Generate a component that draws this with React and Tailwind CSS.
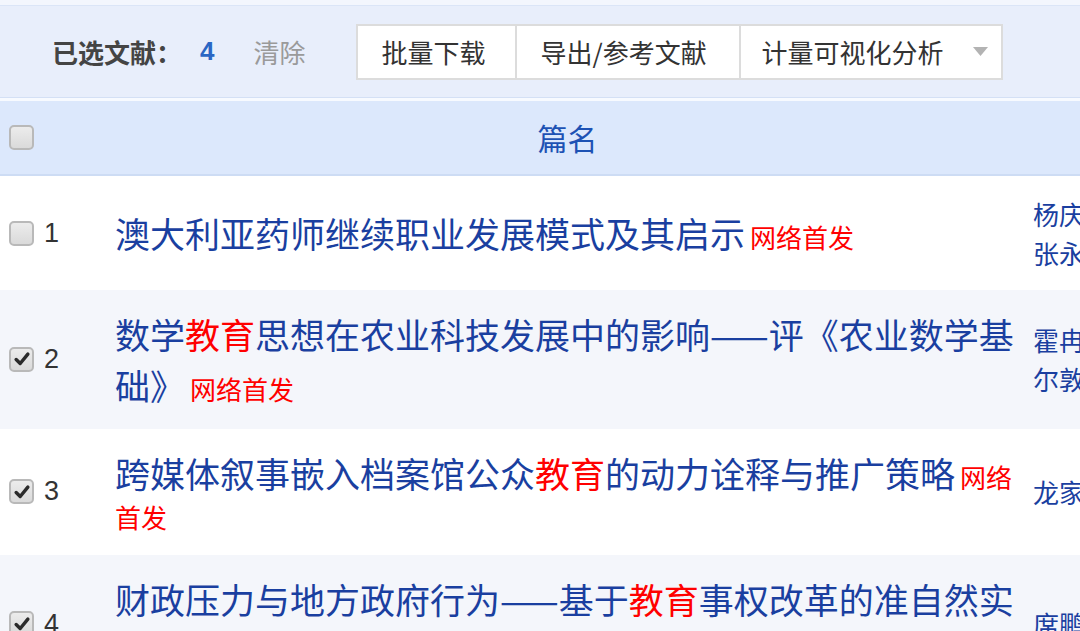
import React from 'react';

const CJK = "font-['Noto_Sans_CJK_SC','Noto_Sans',sans-serif]";

const rows = [
  {
    no: 1,
    checked: false,
    title: [['澳大利亚药师继续职业发展模式及其启示']],
    authors: ['杨庆华', '张永红'],
  },
  {
    no: 2,
    checked: true,
    title: [['数学'], ['教育', true], ['思想在农业科技发展中的影响——评《农业数学基础》']],
    authors: ['霍冉', '尔敦'],
  },
  {
    no: 3,
    checked: true,
    title: [['跨媒体叙事嵌入档案馆公众'], ['教育', true], ['的动力诠释与推广策略']],
    authors: ['龙家庆'],
  },
  {
    no: 4,
    checked: true,
    title: [['财政压力与地方政府行为——基于'], ['教育', true], ['事权改革的准自然实验']],
    authors: ['席鹏辉'],
  },
];

function Checkbox({ checked }) {
  return (
    <span className="flex h-[25px] w-[25px] shrink-0 items-center justify-center rounded-[5px] border-2 border-[#b9b9b9] bg-gradient-to-b from-[#ececec] to-[#dadada]">
      {checked && (
        <svg viewBox="0 0 20 20" className="h-[18px] w-[18px]">
          <path d="M3.5 10.5 L8 15 L16.5 4.5" fill="none" stroke="#2b2b2b" strokeWidth="3.8" strokeLinecap="round" strokeLinejoin="round" />
        </svg>
      )}
    </span>
  );
}

function Row({ row, striped }) {
  return (
    <div className={`flex items-center py-[18px] ${striped ? 'bg-[#f4f6fb]' : 'bg-white'}`}>
      {/* 勾选 + 序号 */}
      <div className="flex w-[115px] shrink-0 items-center pl-[9px]">
        <Checkbox checked={row.checked} />
        <span className="ml-[10px] font-['Liberation_Sans',sans-serif] text-[27px] text-[#333]">{row.no}</span>
      </div>

      {/* 篇名 */}
      <div className="w-[915px] shrink-0 text-[26px] leading-[1.47]">
        <a className="text-[35px] text-[#1a3fa0]">
          {row.title.map(([text, red], i) => (
            <span key={i} className={red ? 'text-[#ff0000]' : ''}>{text}</span>
          ))}
        </a>
        <span className="ml-[5px] text-[#ff0000]">网络首发</span>
      </div>

      {/* 作者 */}
      <div className="ml-[3px] text-[26px] leading-[39px] text-[#1a3fa0] whitespace-nowrap">
        {row.authors.map((a) => (
          <div key={a}>{a}</div>
        ))}
      </div>
    </div>
  );
}

export default function App() {
  return (
    <div className={`h-[631px] w-[1080px] overflow-hidden bg-white ${CJK}`}>
      <div className="h-[6px] border-b border-[#dbe5f7] bg-[#f3f6fd]" />

      {/* 工具栏 */}
      <div className="flex h-[91px] items-center bg-[#e8eefb] pl-[52px] text-[26px]">
        <span className="font-bold text-[#444]">已选文献：</span>
        <span className="ml-[18px] font-['Liberation_Sans',sans-serif] font-bold text-[#2a66c4]">4</span>
        <span className="ml-[39px] text-[#9a9a9a]">清除</span>

        <div className="ml-[50px] flex h-[56px] border-2 border-[#dcdcdc] bg-white text-[#333]">
          <button type="button" className="w-[157px] pl-[24px] text-left">批量下载</button>
          <button type="button" className="w-[224px] border-l-2 border-[#dcdcdc] pl-[24px] text-left">导出/参考文献</button>
          <button type="button" className="flex w-[262px] items-center border-l-2 border-[#dcdcdc] pl-[21px]">
            <span>计量可视化分析</span>
            <svg viewBox="0 0 15 9" className="ml-[29px] h-[9px] w-[15px]">
              <path d="M0 0 H15 L7.5 9 Z" fill="#b3b3b3" />
            </svg>
          </button>
        </div>
      </div>

      <div className="h-[1px] bg-[#d4e0f5]" />
      <div className="h-[3px] bg-[#f7faff]" />

      {/* 表头 */}
      <div className="flex h-[75px] items-center border-b-2 border-[#cddcf4] bg-[#dce8fc]">
        <div className="w-[115px] shrink-0 pl-[9px]">
          <Checkbox checked={false} />
        </div>
        <div className="w-[905px] shrink-0 text-center text-[30px] text-[#1d52b4]">篇名</div>
      </div>

      {rows.map((row, i) => (
        <Row key={row.no} row={row} striped={i % 2 === 1} />
      ))}
    </div>
  );
}
